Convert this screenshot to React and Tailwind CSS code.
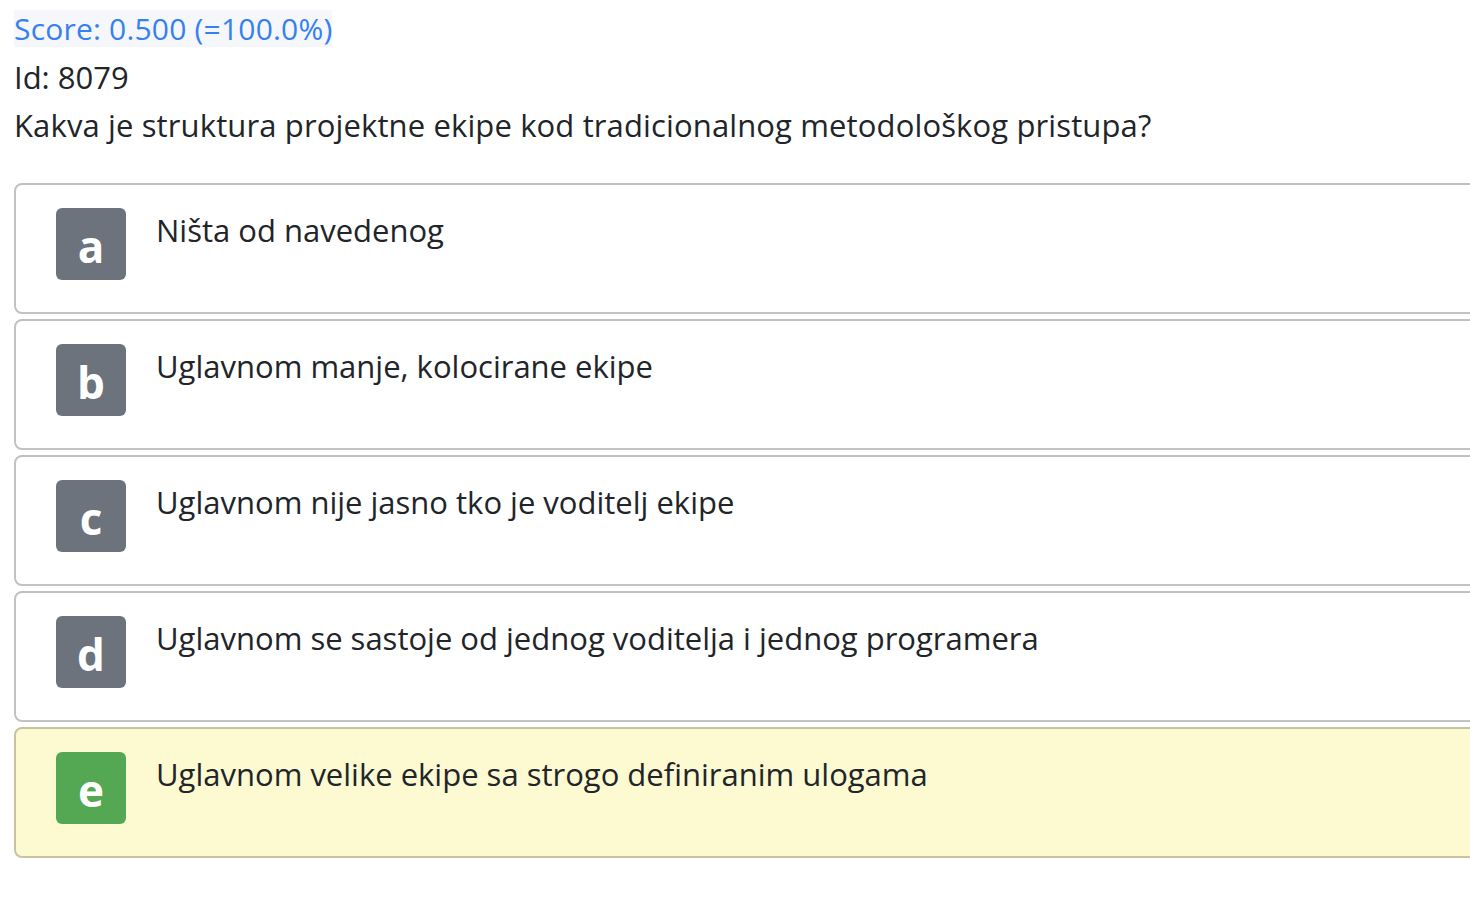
export default function App() {
  const opts = [
    { l: "a", t: "Ništa od navedenog" },
    { l: "b", t: "Uglavnom manje, kolocirane ekipe" },
    { l: "c", t: "Uglavnom nije jasno tko je voditelj ekipe" },
    { l: "d", t: "Uglavnom se sastoje od jednog voditelja i jednog programera" },
    { l: "e", t: "Uglavnom velike ekipe sa strogo definiranim ulogama", correct: true },
  ];
  return (
    <div className="w-[1470px] h-[912px] overflow-hidden bg-white text-[#212529]" style={{ fontFamily: '"Open Sans", sans-serif' }}>
      <div className="pl-[14px] pt-[10px]">
        <div className="h-[43px]">
          <span className="inline-block bg-[#f5f7fa] text-[#3680f0] text-[30px] leading-[37px] tracking-[0.2px]">Score: 0.500 (=100.0%)</span>
        </div>
        <div className="text-[31px] leading-[48px]">Id: 8079</div>
        <div className="text-[31px] leading-[48px] tracking-[0.13px]">Kakva je struktura projektne ekipe kod tradicionalnog metodološkog pristupa?</div>
        <div className="mt-[34px] flex flex-col gap-[5px] w-[1520px]">
          {opts.map((o) => (
            <div
              key={o.l}
              className={
                "h-[131px] rounded-[8px] border-2 flex items-start pt-[23px] pl-[40px] " +
                (o.correct ? "bg-[#fdf9d1] border-[#c8c59e]" : "bg-white border-[#c2c2c2]")
              }
            >
              <div
                className={
                  "w-[70px] h-[72px] rounded-[6px] flex items-center justify-center text-white font-bold text-[44px] leading-none pt-[4px] shrink-0 " +
                  (o.correct ? "bg-[#54a854]" : "bg-[#6c737c]")
                }
              >
                {o.l}
              </div>
              <div className="ml-[30px] -mt-[2px] text-[31px] leading-[48px]">{o.t}</div>
            </div>
          ))}
        </div>
      </div>
    </div>
  );
}
